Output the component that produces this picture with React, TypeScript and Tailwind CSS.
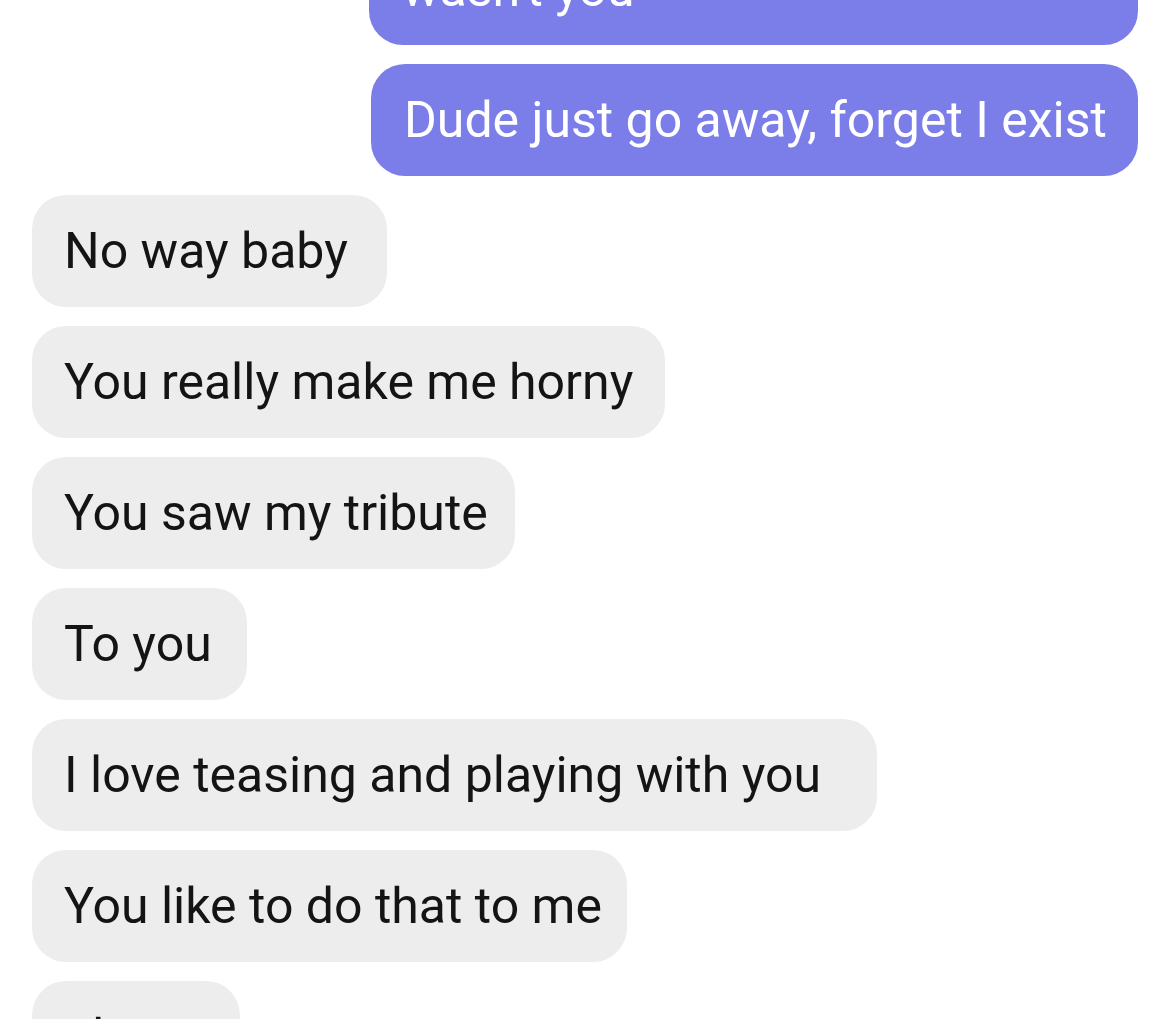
import React from 'react';

const incoming = [
  { text: 'No way baby', w: 'w-[355px]' },
  { text: 'You really make me horny', w: 'w-[633px]' },
  { text: 'You saw my tribute', w: 'w-[483px]' },
  { text: 'To you', w: 'w-[215px]' },
  { text: 'I love teasing and playing with you', w: 'w-[845px]' },
  { text: 'You like to do that to me', w: 'w-[595px]' },
  { text: 'oh my', w: 'w-[208px]' },
];

export default function App() {
  return (
    <div
      className="h-[1019px] w-[1170px] overflow-hidden bg-white"
      style={{ fontFamily: 'Roboto, "Noto Sans", sans-serif' }}
    >
      <div className="-mt-[67px] flex flex-col gap-[19px] px-[32px]">
        {/* outgoing */}
        <div className="flex justify-end">
          <div className="w-[769px] rounded-[34px] bg-[#7b7ee8] px-[33px] py-[26px] text-[50px] leading-[60px] text-white">
            wasn't you
          </div>
        </div>
        <div className="flex justify-end">
          <div className="w-[767px] rounded-[34px] bg-[#7b7ee8] px-[33px] py-[26px] text-[50px] leading-[60px] text-white whitespace-nowrap">
            Dude just go away, forget I exist
          </div>
        </div>

        {/* incoming */}
        {incoming.map((m) => (
          <div key={m.text} className="flex justify-start">
            <div className={`${m.w} rounded-[34px] bg-[#ededed] px-[32px] py-[26px] text-[50px] leading-[60px] text-[#141414] whitespace-nowrap`}>
              {m.text}
            </div>
          </div>
        ))}
      </div>
    </div>
  );
}
